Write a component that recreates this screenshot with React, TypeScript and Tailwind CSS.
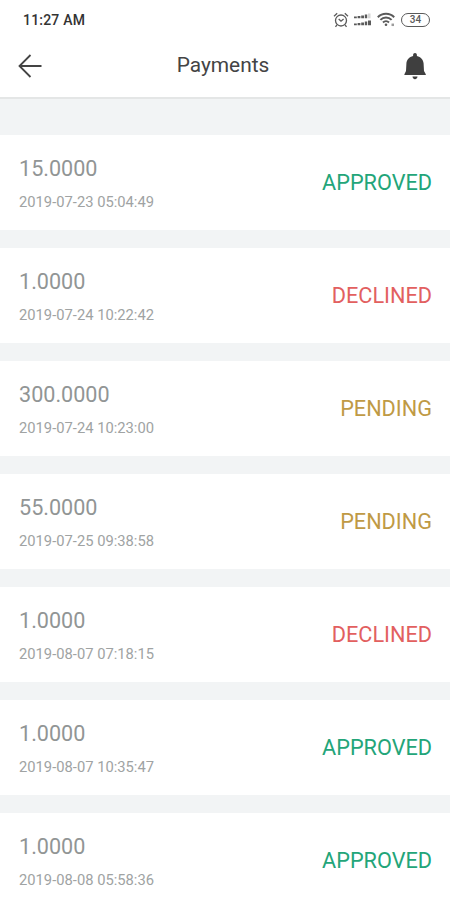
import React from 'react';

type Status = 'APPROVED' | 'DECLINED' | 'PENDING';

interface Payment {
  amount: string;
  date: string;
  status: Status;
}

const payments: Payment[] = [
  { amount: '15.0000', date: '2019-07-23 05:04:49', status: 'APPROVED' },
  { amount: '1.0000', date: '2019-07-24 10:22:42', status: 'DECLINED' },
  { amount: '300.0000', date: '2019-07-24 10:23:00', status: 'PENDING' },
  { amount: '55.0000', date: '2019-07-25 09:38:58', status: 'PENDING' },
  { amount: '1.0000', date: '2019-08-07 07:18:15', status: 'DECLINED' },
  { amount: '1.0000', date: '2019-08-07 10:35:47', status: 'APPROVED' },
  { amount: '1.0000', date: '2019-08-08 05:58:36', status: 'APPROVED' },
];

const statusColors: Record<Status, string> = {
  APPROVED: 'text-[#23a579]',
  DECLINED: 'text-[#e2605f]',
  PENDING: 'text-[#bf9a45]',
};

const App: React.FC = () => {
  return (
    <div className="flex flex-col w-full h-[900px] overflow-hidden bg-[#f2f4f5] font-['Roboto',sans-serif]">
      <div className="shrink-0 bg-white border-b-2 border-[#e4e6e6]">
        <StatusBar />
        <Header />
      </div>
      <main className="flex flex-col gap-[18px] pt-9">
        {payments.map((payment) => (
          <PaymentRow key={payment.date} payment={payment} />
        ))}
      </main>
    </div>
  );
};

const StatusBar: React.FC = () => (
  <div className="flex items-center justify-between h-9 pl-[23px] pr-5 pt-[3px]">
    <span className="text-[14px] leading-none font-medium tracking-[0.2px] text-[#333]">11:27 AM</span>
    <div className="flex items-center text-[#5a5a5a]">
      <AlarmIcon />
      <SignalIcon />
      <WifiIcon />
      <div className="flex items-center justify-center w-[29px] h-[14px] rounded-full border-[1.5px] border-current">
        <span className="text-[10px] leading-none font-medium">34</span>
      </div>
    </div>
  </div>
);

const Header: React.FC = () => (
  <header className="grid grid-cols-[1fr_auto_1fr] items-center h-[61px] px-[18px]">
    <svg width="24" height="24" viewBox="0 0 24 24" fill="none" stroke="#444" strokeWidth="1.800" className="mt-[-1px]">
      <path d="M23.500 12H1.800M12.500 1 1.500 12l11 11" />
    </svg>
    <h1 className="text-[20.9px] leading-6 text-[#444] mt-[-4px] mr-[4px]">Payments</h1>
    <svg width="22" height="27" viewBox="0 0 22 27" fill="#3f3f3f" className="justify-self-end mr-[6px]">
      <path d="M11 0c1.100 0 1.900.8 1.900 1.900v1c3.900.9 6.500 3.900 6.700 7.600l.4 7.500 1.800 3.200V22H.400v-.800L2 18l.4-7.500c.2-3.700 2.800-6.700 6.700-7.600v-1C9.100.800 9.900 0 11 0zM8.500 23.600h5c0 1.500-1 2.600-2.500 2.600s-2.500-1.100-2.500-2.600z" />
    </svg>
  </header>
);

const PaymentRow: React.FC<{ payment: Payment }> = ({ payment }) => (
  <div className="flex items-center justify-between shrink-0 h-[95px] pl-[19px] pr-[18px] bg-white">
    <div className="flex flex-col pt-[1px]">
      <span className="text-[21.6px] leading-[26px] text-[#919595]">{payment.amount}</span>
      <span className="mt-[11px] text-[14.75px] leading-[18px] text-[#a0a3a3]">{payment.date}</span>
    </div>
    <span className={`text-[21.7px] leading-[26px] ${statusColors[payment.status]}`}>{payment.status}</span>
  </div>
);

const AlarmIcon: React.FC = () => (
  <svg width="16" height="16" viewBox="0 0 16 16" fill="none" stroke="currentColor" strokeWidth="1.300">
    <circle cx="8" cy="8.500" r="5.500" />
    <path d="M1 4.200 4.200 1.300M15 4.200l-3.200-2.900M3.900 12.900 2.500 14.800M12.100 12.900l1.400 1.900M5.700 7 8 9.200 10.600 7" />
  </svg>
);

// Two stacked SIM signal meters
const SignalIcon: React.FC = () => (
  <svg width="18" height="14" viewBox="0 0 18 14" fill="currentColor" className="ml-[5px]">
    <path d="M0 3.500h2.800v1.800H0zM3.600 3h2.800v2.300H3.600zM7.200 2.500h2.800v2.800H7.200zM10.800 1.500h2.400v3.800h-2.400z" />
    <path d="M14 .500h2.500v4.800H14z" opacity="0.25" />
    <path d="M0 10.500h2.800v1.800H0zM3.600 10h2.800v2.300H3.600zM7.200 9.500h2.800v2.800H7.200zM10.800 8.500h2.400v3.800h-2.400zM14 7.500h3v4.800h-3z" />
  </svg>
);

const WifiIcon: React.FC = () => (
  <svg width="19" height="15" viewBox="0 0 19 15" fill="none" stroke="currentColor" strokeWidth="2" className="ml-[5px] mr-[5px]">
    <path d="M.800 5.200c4.500-4.500 11.900-4.500 16.400 0M3.400 7.900c3.100-3.100 8.100-3.100 11.200 0M6 10.500c1.700-1.700 4.300-1.700 6 0" />
    <circle cx="9" cy="12.800" r="1.300" fill="currentColor" stroke="none" />
    <path d="M14.500 12.800h2.500" strokeWidth="2.500" opacity="0.6" />
  </svg>
);

export default App;
